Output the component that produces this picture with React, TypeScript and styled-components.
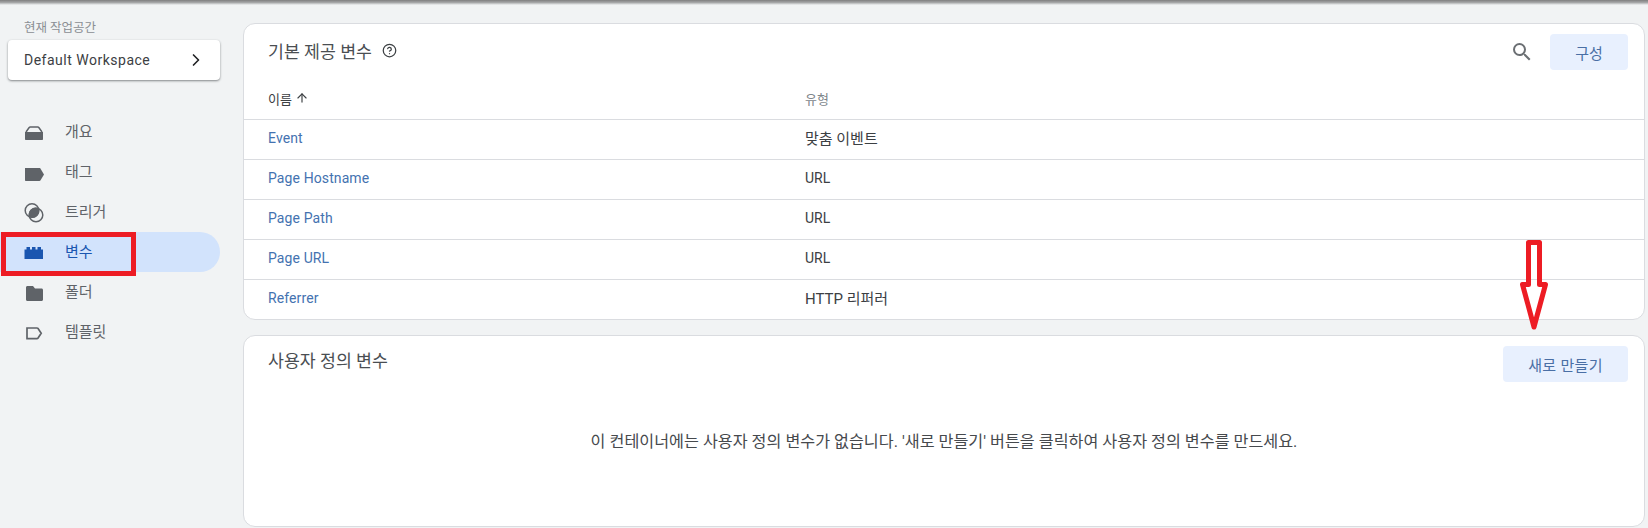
import styled, { createGlobalStyle } from 'styled-components'
import { ChevronRight, ArrowUp, CircleHelp } from 'lucide-react'

const GlobalStyle = createGlobalStyle`
  html, body {
    margin: 0;
    padding: 0;
    height: 528px;
    overflow: hidden;
    background: #f1f3f4;
    font-family: Roboto, "Noto Sans CJK KR", sans-serif;
  }
  * { box-sizing: border-box; }
`

const Page = styled.div`
  position: relative;
  display: flex;
  width: 1648px;
  height: 528px;
  overflow: hidden;
  background: #f1f3f4;
`

const TopShadow = styled.div`
  position: absolute;
  top: 0;
  left: 0;
  right: 0;
  height: 5px;
  background: linear-gradient(#7f7f7f, #a5a6a7 50%, #f1f3f4);
`

const Sidebar = styled.aside`
  width: 243px;
  flex-shrink: 0;
  padding-top: 21px;
`

const WorkspaceLabel = styled.div`
  padding-left: 24px;
  font-size: 12.5px;
  line-height: 14px;
  color: #8a8e93;
  margin-bottom: 5px;
`

const WorkspaceCard = styled.div`
  display: flex;
  align-items: center;
  justify-content: space-between;
  width: 212px;
  height: 40px;
  margin-left: 8px;
  padding: 0 14px 0 16px;
  background: #fff;
  border-radius: 4px;
  box-shadow: 0 1px 2px rgba(60, 64, 67, 0.5), 0 1px 3px rgba(60, 64, 67, 0.15);
  font-size: 14px;
  letter-spacing: 0.5px;
  color: #3c4043;
`

const Nav = styled.nav`
  margin-top: 32px;
  display: flex;
  flex-direction: column;
`

const NavItem = styled.div<{ $active?: boolean }>`
  display: flex;
  align-items: center;
  width: 220px;
  height: 40px;
  padding: 0 0 4px 24px;
  gap: 21px;
  border-radius: 0 20px 20px 0;
  font-size: 15px;
  color: ${p => (p.$active ? '#1a56b0' : '#5f6368')};
  background: ${p => (p.$active ? '#d2e3fc' : 'transparent')};

  svg {
    width: 20px;
    height: 20px;
    flex-shrink: 0;
    margin-top: 4px;
    overflow: visible;
    fill: ${p => (p.$active ? '#1a56b0' : '#5f6368')};
  }
`

const Main = styled.main`
  flex: 1;
  padding: 23px 3px 0 0;
  display: flex;
  flex-direction: column;
  gap: 15px;
`

const Card = styled.section`
  background: #fff;
  border: 1px solid #dadce0;
  border-radius: 12px;
`

const CardHeader = styled.div`
  display: flex;
  align-items: flex-start;
  justify-content: space-between;
  height: 61px;
  padding: 10px 16px 0 24px;
`

const TitleRow = styled.div`
  display: flex;
  align-items: center;
  gap: 10px;
  height: 32px;
  font-size: 17.3px;
  color: #4a4e52;
`

const Tools = styled.div`
  display: flex;
  align-items: center;
  gap: 16px;
  color: #5f6368;
`

const SearchGlyph = styled.svg`
  width: 24px;
  height: 24px;
  fill: #6b6f73;
`

const Action = styled.button`
  height: 36px;
  border: none;
  border-radius: 4px;
  background: #e8f0fe;
  color: #4a6fa5;
  font-family: inherit;
  font-size: 15px;
  padding: 0;
`

const ConfigureAction = styled(Action)`
  width: 78px;
`

const CreateAction = styled(Action)`
  width: 125px;
  letter-spacing: 0.3px;
`

const TableHead = styled.div`
  display: grid;
  grid-template-columns: 537px 1fr;
  align-items: center;
  height: 35px;
  padding: 0 0 8px 24px;
  font-size: 13px;
  color: #3c4043;
  border-bottom: 1px solid #dadce0;
`

const SortLabel = styled.div`
  display: flex;
  align-items: center;
  gap: 3px;
`

const MutedLabel = styled.div`
  color: #80868b;
`

const Row = styled.div`
  display: grid;
  grid-template-columns: 537px 1fr;
  align-items: center;
  height: 40px;
  padding: 0 0 4px 24px;
  font-size: 14px;
  color: #3c4043;
  border-bottom: 1px solid #dadce0;

  &:last-child {
    height: 39px;
    border-bottom: none;
  }
`

const VarLink = styled.a`
  color: #4472b0;
  letter-spacing: 0.1px;
`

const TypeText = styled.span<{ $ko: boolean }>`
  font-size: ${p => (p.$ko ? '15px' : '14px')};
`

const CustomCard = styled(Card)`
  flex: 1;
  margin-bottom: 1px;
`

const CustomHeader = styled.div`
  display: flex;
  align-items: flex-start;
  justify-content: space-between;
  height: 96px;
  padding: 10px 16px 0 24px;
`

const CustomTitle = styled.div`
  font-size: 17.3px;
  line-height: 24px;
  margin-top: 3px;
  color: #4a4e52;
`

const EmptyText = styled.p`
  margin: 0;
  text-align: center;
  font-size: 16.2px;
  line-height: 20px;
  color: #46494d;
`

const RedBox = styled.div`
  position: absolute;
  left: 1px;
  top: 232px;
  width: 135px;
  height: 44px;
  border: 5px solid #ed1c24;
`

const RedArrow = styled.svg`
  position: absolute;
  left: 1519px;
  top: 239px;
  width: 30px;
  height: 92px;
`

const nav = [
  {
    label: '개요',
    icon: (
      <>
        <path fill="none" stroke="#5f6368" strokeWidth="1.500" d="M2 10l3-4.200c.3-.4.7-.8 1.300-.8h7.400c.6 0 1 .4 1.300.8l3 4.200" />
        <path d="M1 10h18v7c0 .6-.4 1-1 1H2c-.6 0-1-.4-1-1v-7z" />
      </>
    ),
  },
  {
    label: '태그',
    icon: <path d="M1 6h14.500c.4 0 .7.200.9.400L20 12.500l-3.600 6.100c-.2.300-.5.400-.9.400H2c-.6 0-1-.4-1-1V6z" />,
  },
  {
    label: '트리거',
    icon: (
      <>
        <circle cx="8" cy="8.500" r="6.800" fill="none" stroke="#5f6368" strokeWidth="1.500" />
        <circle cx="12" cy="13" r="6.800" fill="none" stroke="#5f6368" strokeWidth="1.500" />
        <path d="M14.500 6.200A6.800 6.800 0 0 1 5.500 15.300 6.800 6.800 0 0 1 14.500 6.200z" />
      </>
    ),
  },
  {
    label: '변수',
    active: true,
    icon: <path d="M.5 7.500h2V5h3.500v2.500h2V5h3.500v2.500h2V5H17v2.500h2V17H.5V7.500z" />,
  },
  {
    label: '폴더',
    icon: <path d="M3.500 4H9l2 2.500h6.500c.9 0 1.500.6 1.500 1.500v9.500c0 .9-.6 1.500-1.500 1.500h-14c-.9 0-1.500-.6-1.500-1.500v-12C2 4.600 2.600 4 3.500 4z" />,
  },
  {
    label: '템플릿',
    icon: <path fill="none" stroke="#5f6368" strokeWidth="1.700" d="M3 6h10c.4 0 .7.200.9.400l3.300 4.900-3.300 4.900c-.2.300-.5.400-.9.400H3V6z" />,
  },
]

const vars = [
  { name: 'Event', type: '맞춤 이벤트', ko: true },
  { name: 'Page Hostname', type: 'URL', ko: false },
  { name: 'Page Path', type: 'URL', ko: false },
  { name: 'Page URL', type: 'URL', ko: false },
  { name: 'Referrer', type: 'HTTP 리퍼러', ko: true },
]

function App() {
  return (
    <Page>
      <GlobalStyle />
      <TopShadow />
      <Sidebar>
        <WorkspaceLabel>현재 작업공간</WorkspaceLabel>
        <WorkspaceCard>
          Default Workspace
          <ChevronRight size={20} color="#202124" strokeWidth={2} />
        </WorkspaceCard>
        <Nav>
          {nav.map(item => (
            <NavItem key={item.label} $active={item.active}>
              <svg viewBox="0 0 20 20">{item.icon}</svg>
              {item.label}
            </NavItem>
          ))}
        </Nav>
      </Sidebar>

      <Main>
        <Card>
          <CardHeader>
            <TitleRow>
              기본 제공 변수
              <CircleHelp size={15} color="#3c4043" strokeWidth={2} />
            </TitleRow>
            <Tools>
              <SearchGlyph viewBox="0 0 24 24">
                <path d="M15.5 14h-.79l-.28-.27A6.471 6.471 0 0 0 16 9.5 6.5 6.5 0 1 0 9.5 16c1.61 0 3.09-.59 4.23-1.57l.27.28v.79l5 4.99L20.49 19l-4.990-5zm-6 0C7.010 14 5 11.990 5 9.500S7.010 5 9.500 5 14 7.010 14 9.500 11.990 14 9.500 14z" />
              </SearchGlyph>
              <ConfigureAction>구성</ConfigureAction>
            </Tools>
          </CardHeader>
          <TableHead>
            <SortLabel>
              이름
              <ArrowUp size={14} color="#3c4043" strokeWidth={2} />
            </SortLabel>
            <MutedLabel>유형</MutedLabel>
          </TableHead>
          {vars.map(v => (
            <Row key={v.name}>
              <VarLink>{v.name}</VarLink>
              <TypeText $ko={v.ko}>{v.type}</TypeText>
            </Row>
          ))}
        </Card>

        <CustomCard>
          <CustomHeader>
            <CustomTitle>사용자 정의 변수</CustomTitle>
            <CreateAction>새로 만들기</CreateAction>
          </CustomHeader>
          <EmptyText>이 컨테이너에는 사용자 정의 변수가 없습니다. '새로 만들기' 버튼을 클릭하여 사용자 정의 변수를 만드세요.</EmptyText>
        </CustomCard>
      </Main>

      <RedBox />
      <RedArrow viewBox="0 0 30 92">
        <path
          d="M9.500 3.500h11v42h6L15 88 3.500 45.500h6z"
          fill="none"
          stroke="#ed1c24"
          strokeWidth="5"
          strokeLinejoin="round"
        />
      </RedArrow>
    </Page>
  )
}

export default App
